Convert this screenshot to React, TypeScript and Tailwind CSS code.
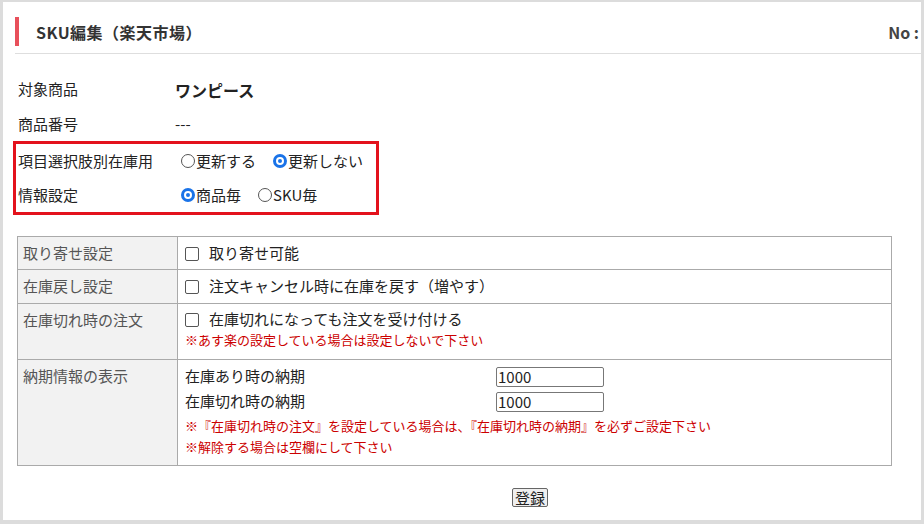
export default function App() {
  const f = { fontFamily: '"Noto Sans CJK JP", "Liberation Sans", sans-serif' };
  const Radio = ({ on }: { on?: boolean }) =>
    on ? (
      <span className="inline-block w-[14px] h-[14px] rounded-full mr-[1px] bg-[#1a73e8] border-[3px] border-[#1a73e8] relative">
        <span className="absolute inset-[0px] rounded-full border-[2px] border-white" />
      </span>
    ) : (
      <span className="inline-block w-[14px] h-[14px] rounded-full mr-[1px] border border-[#555] bg-white" />
    );
  const Check = () => <span className="inline-block w-[14px] h-[14px] border border-[#555] rounded-[2px] mr-[10px] align-[-2px] bg-white" />;
  return (
    <div className="w-[924px] h-[524px] bg-white border-t-[2px] border-l-[3px] border-r-[3px] border-b-[4px] border-[#dcdcdc] text-[#222] text-[15px] relative" style={f}>
      <div className="ml-[12px] mt-[15px] flex items-center h-[29px] border-l-[4px] border-[#e8505b]">
        <span className="ml-[17px] font-bold text-[16px] tracking-[0.5px] text-[#333]">SKU編集（楽天市場）</span>
        <span className="ml-auto mr-[2px] font-bold text-[16px] text-[#444]">No :</span>
      </div>
      <div className="ml-[12px] mt-[7px] h-px bg-[#dedede]" />
      <div className="ml-[15px] mt-[18px]">
        <div className="flex h-[35px] items-center"><span className="w-[157px]">対象商品</span><b className="text-[16px]">ワンピース</b></div>
        <div className="flex h-[34px] items-center"><span className="w-[157px]">商品番号</span><span>---</span></div>
      </div>
      <div className="ml-[10px] w-[366px] h-[74px] border-[3px] border-[#e3121c] pl-[2px] flex flex-col justify-center gap-[12px]">
        <div className="flex items-center"><span className="w-[163px]">項目選択肢別在庫用</span><Radio />更新する<span className="w-[17px]" /><Radio on />更新しない</div>
        <div className="flex items-center"><span className="w-[163px]">情報設定</span><Radio on />商品毎<span className="w-[17px]" /><Radio />SKU毎</div>
      </div>
      <table className="ml-[14px] mt-[21px] w-[875px] border-collapse text-[15px]">
        <tbody>
          <tr className="h-[33px]">
            <td className="w-[160px] bg-[#f2f2f2] border border-[#aaa] pl-[5px] text-[#555]">取り寄せ設定</td>
            <td className="border border-[#aaa] pl-[7px]"><Check />取り寄せ可能</td>
          </tr>
          <tr className="h-[34px]">
            <td className="bg-[#f2f2f2] border border-[#aaa] pl-[5px] text-[#555]">在庫戻し設定</td>
            <td className="border border-[#aaa] pl-[7px]"><Check />注文キャンセル時に在庫を戻す（増やす）</td>
          </tr>
          <tr className="h-[56px]">
            <td className="bg-[#f2f2f2] border border-[#aaa] pl-[5px] text-[#555] align-top pt-[5px]">在庫切れ時の注文</td>
            <td className="border border-[#aaa] pl-[7px] align-top pt-[4px]">
              <div><Check />在庫切れになっても注文を受け付ける</div>
              <div className="text-[13px] text-[#c00] leading-[18px]">※あす楽の設定している場合は設定しないで下さい</div>
            </td>
          </tr>
          <tr className="h-[106px]">
            <td className="bg-[#f2f2f2] border border-[#aaa] pl-[5px] text-[#555] align-top pt-[5px]">納期情報の表示</td>
            <td className="border border-[#aaa] pl-[7px] align-top pt-[4px]">
              <div className="flex items-center h-[25px]"><span className="w-[311px]">在庫あり時の納期</span><span className="w-[108px] h-[20px] border border-[#777] rounded-[2px] text-[15px] leading-[18px] pl-[1px]">1000</span></div>
              <div className="flex items-center h-[25px]"><span className="w-[311px]">在庫切れ時の納期</span><span className="w-[108px] h-[20px] border border-[#777] rounded-[2px] text-[15px] leading-[18px] pl-[1px]">1000</span></div>
              <div className="text-[13px] text-[#c00] mt-[1px] leading-[22px]">※『在庫切れ時の注文』を設定している場合は、『在庫切れ時の納期』を必ずご設定下さい</div>
              <div className="text-[13px] text-[#c00] leading-[20px]">※解除する場合は空欄にして下さい</div>
            </td>
          </tr>
        </tbody>
      </table>
      <div className="mt-[22px] flex pl-[509px]">
        <span className="border border-[#666] bg-[#efefef] rounded-[2px] px-[2px] text-[15px] leading-[17px]">登録</span>
      </div>
    </div>
  );
}
